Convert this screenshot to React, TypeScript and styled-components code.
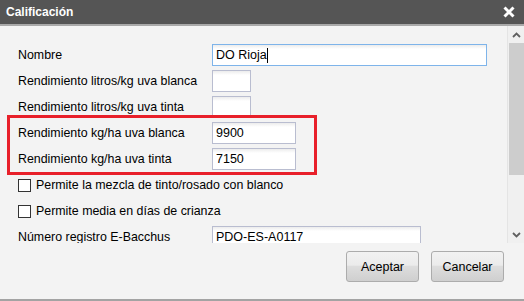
import React from "react";
import styled, { createGlobalStyle } from "styled-components";

const Global = createGlobalStyle`
  html, body { margin: 0; padding: 0; background: #f3f3f3; }
  body { font-family: "Liberation Sans", Arial, sans-serif; font-size: 12.4px; color: #000; }
  * { box-sizing: border-box; }
`;

const Dialog = styled.div`
  width: 524px;
  height: 301px;
  display: flex;
  flex-direction: column;
  background: #f3f3f3;
  border-bottom: 2px solid #a3a3a3;
  overflow: hidden;
`;

const TitleBar = styled.div`
  height: 26px;
  flex: none;
  background: #555555;
  border-bottom: 2px solid #a9a9a9;
  display: flex;
  align-items: center;
  justify-content: space-between;
  padding: 0 9px 0 6px;
`;

const Title = styled.span`
  color: #fff;
  font-weight: bold;
  font-size: 12px;
  line-height: 24px;
`;

const Body = styled.div`
  height: 217px;
  flex: none;
  display: flex;
`;

const ScrollContent = styled.div`
  flex: 1;
  padding: 18px 0 0 18px;
  display: flex;
  flex-direction: column;
  gap: 4px;
  overflow: hidden;
`;

const Row = styled.div`
  display: flex;
  align-items: center;
  height: 22px;
  flex: none;
`;

const Label = styled.label`
  width: 194px;
  flex: none;
  line-height: 14px;
`;

const Input = styled.div<{ $w: number; $focus?: boolean }>`
  width: ${(p) => p.$w}px;
  height: 22px;
  flex: none;
  border: 1px solid ${(p) => (p.$focus ? "#7eb4ea" : "#b9bdd0")};
  background: linear-gradient(#ececec 0px, #ffffff 4px, #ffffff);
  padding: 0 3px;
  display: flex;
  align-items: center;
  font-size: 12.5px;
`;

const Caret = styled.span`
  display: inline-block;
  width: 1px;
  height: 15px;
  background: #000;
`;

const Highlight = styled.div`
  width: 310px;
  margin: -7px 0 -5px -11px;
  padding: 4px 0 2px 8px;
  border: 3px solid #e8202a;
  display: flex;
  flex-direction: column;
  gap: 4px;
  flex: none;
`;

const CheckRow = styled.div`
  display: flex;
  align-items: center;
  gap: 5px;
  height: 22px;
  flex: none;
`;

const Box = styled.span`
  width: 13px;
  height: 13px;
  border: 1px solid #333;
  background: #fff;
  flex: none;
`;

const ScrollBar = styled.div`
  width: 17px;
  flex: none;
  border-left: 1px solid #e4e4e4;
  background: #f0f0f0;
  display: flex;
  flex-direction: column;
`;

const Arrow = styled.div`
  height: 17px;
  display: flex;
  align-items: center;
  justify-content: center;
  flex: none;
`;

const Thumb = styled.div`
  height: 132px;
  background: #cdcdcd;
  margin: 0 0 0 1px;
  flex: none;
`;

const Track = styled.div`
  flex: 1;
`;

const Footer = styled.div`
  flex: 1;
  display: flex;
  justify-content: flex-end;
  align-items: flex-start;
  gap: 12px;
  padding: 8px 20px 0 0;
`;

const Button = styled.button`
  width: 73px;
  height: 31px;
  border: 1px solid #acacac;
  border-radius: 3px;
  background: linear-gradient(#f2f2f2 0%, #ebebeb 45%, #dddddd 50%, #cfcfcf 100%);
  font-family: "Liberation Sans", Arial, sans-serif;
  font-size: 12.5px;
  color: #000;
  padding: 0;
`;

const Chevron = ({ up }: { up?: boolean }) => (
  <svg width="9" height="6" viewBox="0 0 9 6">
    <path
      d={up ? "M1 5 L4.5 1.5 L8 5" : "M1 1 L4.5 4.5 L8 1"}
      fill="none"
      stroke="#606060"
      strokeWidth="1.8"
    />
  </svg>
);

const CloseIcon = () => (
  <svg width="12" height="12" viewBox="0 0 12 12">
    <path d="M1.5 1.5 L10.5 10.5 M10.5 1.5 L1.5 10.5" stroke="#fff" strokeWidth="3" />
  </svg>
);

export default function App() {
  return (
    <>
      <Global />
      <Dialog>
        <TitleBar>
          <Title>Calificación</Title>
          <CloseIcon />
        </TitleBar>
        <Body>
          <ScrollContent>
            <Row>
              <Label>Nombre</Label>
              <Input $w={275} $focus>
                DO Rioja<Caret />
              </Input>
            </Row>
            <Row>
              <Label>Rendimiento litros/kg uva blanca</Label>
              <Input $w={39} />
            </Row>
            <Row>
              <Label>Rendimiento litros/kg uva tinta</Label>
              <Input $w={39} />
            </Row>
            <Highlight>
              <Row>
                <Label>Rendimiento kg/ha uva blanca</Label>
                <Input $w={84}>9900</Input>
              </Row>
              <Row>
                <Label>Rendimiento kg/ha uva tinta</Label>
                <Input $w={84}>7150</Input>
              </Row>
            </Highlight>
            <CheckRow>
              <Box />
              <span>Permite la mezcla de tinto/rosado con blanco</span>
            </CheckRow>
            <CheckRow>
              <Box />
              <span>Permite media en días de crianza</span>
            </CheckRow>
            <Row>
              <Label>Número registro E-Bacchus</Label>
              <Input $w={209}>PDO-ES-A0117</Input>
            </Row>
          </ScrollContent>
          <ScrollBar>
            <Arrow>
              <Chevron up />
            </Arrow>
            <Thumb />
            <Track />
            <Arrow>
              <Chevron />
            </Arrow>
          </ScrollBar>
        </Body>
        <Footer>
          <Button>Aceptar</Button>
          <Button>Cancelar</Button>
        </Footer>
      </Dialog>
    </>
  );
}
